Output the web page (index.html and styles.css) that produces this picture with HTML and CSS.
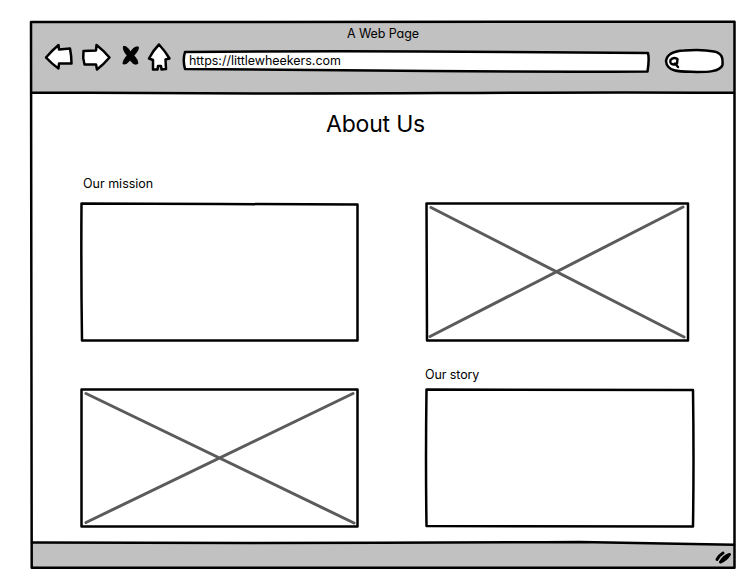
FILE: index.html
```html
<!DOCTYPE html>
<html lang="en">
<head>
<meta charset="utf-8">
<title>A Web Page</title>
<link rel="stylesheet" href="styles.css">
</head>
<body>
<div class="window">
  <header class="chrome">
    <div class="window-title">A Web Page</div>
    <nav class="toolbar">
      <svg class="icon back" viewBox="44 42 30 32"><path d="M46 57.500Q52 50.500 58.500 45L59 49.500L70 48.500Q71.500 56 71.500 63.500L59 63.500L58.500 68.500Q52 64 46 57.500Z"/></svg>
      <svg class="icon forward" viewBox="80 42 32 32"><path d="M83.500 51L96 50.500L96.500 45Q103 50 109.500 57.500Q104 64 97 69.500L96 64.500L84.500 64.500Q82.500 58 83.500 51Z"/></svg>
      <svg class="icon stop" viewBox="121 42 19 32"><path class="cross-mark" d="M123.500 46.500Q127 45.500 130.500 52Q134 46 138.500 47Q139 50 134 55.500Q138 60 138 63.500Q134 66 130 60Q127 65 123 64Q122.500 61 127 55.500Q122 49 123.500 46.500Z"/></svg>
      <svg class="icon home" viewBox="146 42 26 32"><path d="M159 44.500Q165 51 169.500 58.500L165.500 59.500L166 69L161.500 69.500L161 66L158 66L157.500 69.500L153 69.500L153 60L149 58.500Q153 50.500 159 44.500Z"/></svg>
      <div class="address">
        <svg class="outline" viewBox="181 42 470 32"><path d="M185 52Q300 51 420 51.500T648 53Q649.500 59 647.500 71.500Q540 72 430 71T185 69Q182.500 60 185 52Z"/></svg>
        <span class="url">https://littlewheekers.com</span>
      </div>
      <svg class="icon search" viewBox="663 42 63 32"><path d="M666 61C667 54 674 51 684 50.500Q702 49 714 51.500C722 53 723 58 722.500 65C720 72 706 72 697 72C682 71.500 667 73 666 61Z"/><path class="lens" d="M670.500 60Q673 56.500 677.500 59L677 63.500Q674 65.500 671 63.500Q669.800 62 670.500 60ZM675 63.500L678 67"/></svg>
    </nav>
  </header>
  <main class="page">
    <h1>About Us</h1>
    <div class="columns">
      <div class="column">
        <h2>Our mission</h2>
        <svg class="box" viewBox="79 201 281 142"><path d="M81.500 203.500L220 204L357.500 204.500L357.500 340.500L82 340.500Q81 270 81.500 203.500Z"/></svg>
        <svg class="box picture" viewBox="79 387 281 142"><path d="M81.500 389.500L357.500 389.500L357.500 526.500L81.500 526.500Z"/><path class="cross" d="M86 393.500L354 523M353 393.500L86 522.500"/></svg>
      </div>
      <div class="column second">
        <svg class="box" viewBox="424 201 272 142"><path d="M426.500 203.500L688 203.500L688 340.500L427 340.500Z"/><path class="cross" d="M431 207.500L684 337M683 207L430 336.500"/></svg>
        <h2>Our story</h2>
        <svg class="box" viewBox="424 387 272 142"><path d="M426.500 389.500L693 390Q694 460 693 526.500L426.500 526Q425.500 460 426.500 389.500Z"/></svg>
      </div>
    </div>
  </main>
  <footer class="statusbar">
    <svg class="grip" viewBox="29 540 708 31"><path class="ground" d="M31 542.500L580 542.500L735 544.500L735 568L31 568Z"/><path class="rule" d="M32 542.500Q300 543.500 580 542L734 544.700"/><path class="mark" d="M717 559.500Q719 555.500 723 553M720.500 562Q724 556.500 729.500 554.500Q726 560 720.500 562"/></svg>
  </footer>
  <svg class="frame" viewBox="29 20 708 551"><path d="M31 22L734.500 21.700Q735 300 734.500 567.700L31.700 567.700Q32 300 31 22ZM31 92.500Q250 94 440 93T734.500 92.800"/></svg>
</div>
</body>
</html>
```
FILE: styles.css
```css
* { box-sizing: border-box; }
body {
  margin: 0;
  padding: 20px 0 0 29px;
  background: #fff;
  color: #000;
  font: 12.500px/16px Inter, sans-serif;
  font-feature-settings: "cv11";
}
svg {
  display: block;
  fill: #fff;
  stroke: #000;
  stroke-width: 2.500;
  stroke-linejoin: round;
  stroke-linecap: round;
}
.window {
  position: relative;
  display: grid;
  grid-template-rows: 73px 447px 31px;
  width: 708px;
  height: 551px;
}
.frame {
  position: absolute;
  inset: 0;
  width: 708px;
  height: 551px;
}
.frame path { fill: none; }
.chrome {
  margin: 2px 2px 0;
  background: #c1c1c1;
}
.window-title {
  height: 20px;
  padding-top: 4px;
  text-align: center;
  letter-spacing: -.1px;
}
.toolbar {
  display: flex;
  height: 32px;
  padding-left: 13px;
}
.icon { flex: none; height: 32px; }
.back { width: 30px; }
.forward { width: 32px; margin-left: 6px; }
.stop { width: 19px; margin-left: 9px; }
.home { width: 26px; margin-left: 6px; }
.address {
  position: relative;
  width: 470px;
  height: 32px;
  margin-left: 9px;
  padding: 11px 0 0 8px;
}
.outline { position: absolute; inset: 0; width: 470px; height: 32px; }
.url { position: relative; display: block; letter-spacing: -.03px; }
.search { width: 63px; margin-left: 12px; }
.cross-mark { fill: #000; stroke-width: .8; }
.lens { stroke-width: 2.400; }
.page { padding-top: 15px; }
h1, h2 { margin: 0; font-weight: 400; }
h1 {
  width: 693px;
  text-align: center;
  font-size: 23px;
  line-height: 32px;
  letter-spacing: -.2px;
}
.columns {
  display: grid;
  grid-template-columns: 281px 272px;
  column-gap: 64px;
  padding: 36px 0 0 50px;
}
.column h2 { height: 25px; padding-left: 4px; font-size: 12.500px; line-height: 16px; }
.box { width: 100%; height: 142px; }
.picture { margin-top: 44px; }
.second { padding-top: 25px; }
.column.second h2 { height: 44px; padding: 24px 0 0 1px; letter-spacing: -.1px; }
.box .cross { fill: none; stroke: #5b5b5b; stroke-width: 3; }
.grip { width: 708px; height: 31px; }
.ground { fill: #c1c1c1; stroke: none; }
.rule { fill: none; }
.mark { stroke-width: 3; fill: none; }
```
